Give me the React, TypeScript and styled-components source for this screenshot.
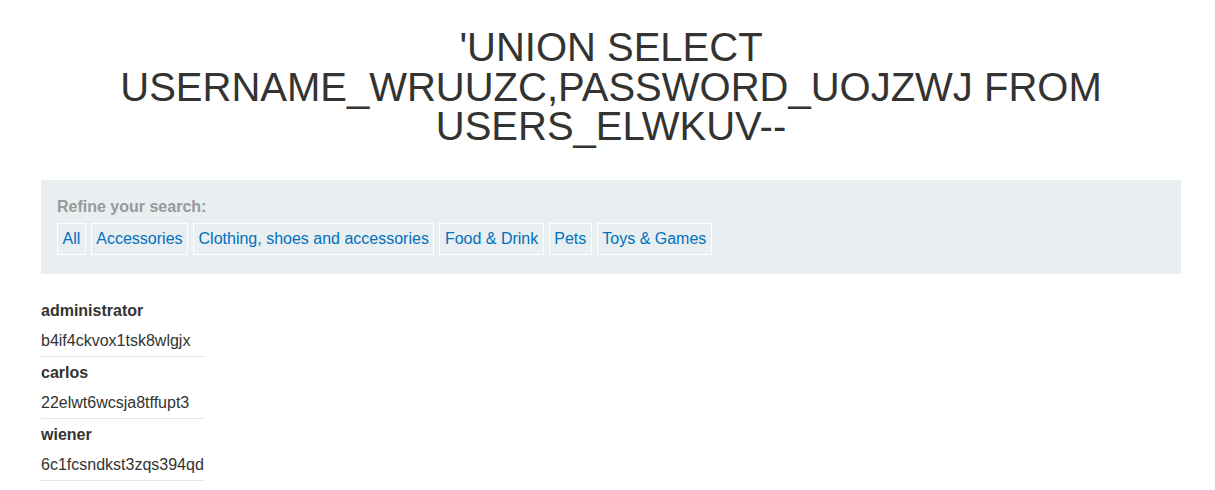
import React from "react";
import styled, { createGlobalStyle } from "styled-components";

const GlobalStyle = createGlobalStyle`
  html, body { margin: 0; padding: 0; background: #fff; }
  body { font-family: "Liberation Sans", Arial, sans-serif; color: #333332; font-size: 16px; }
`;

const Page = styled.div`
  width: 1140px;
  margin-left: 41px;
  padding-top: 28px;
`;

const Title = styled.h1`
  margin: 0 0 33px;
  font-size: 40px;
  line-height: 39.6px;
  font-weight: 400;
  text-align: center;
  color: #333332;
  word-break: break-word;
`;

const Filter = styled.section`
  background: #e9eef1;
  padding: 18px 16px 19px;
  margin-bottom: 21px;
`;

const Label = styled.div`
  font-weight: 700;
  color: #999999;
  line-height: 18.4px;
  margin-bottom: 7px;
`;

const Categories = styled.div`
  display: flex;
  gap: 5px;
`;

const Category = styled.a`
  display: block;
  border: 1px solid #ffffff;
  padding: 5px 4.5px;
  line-height: 19.5px;
  color: #0071bc;
  text-decoration: none;
`;

const Table = styled.table`
  border-collapse: collapse;
  border-spacing: 0;
`;

const Th = styled.th`
  text-align: left;
  font-weight: 700;
  padding: 6px 0 5px;
  line-height: 20px;
  color: #333332;
`;

const Td = styled.td`
  padding: 5px 0;
  line-height: 20px;
  border-bottom: 1px solid #e6e6e6;
  color: #333332;
`;

const categories = ["All", "Accessories", "Clothing, shoes and accessories", "Food & Drink", "Pets", "Toys & Games"];

const users = [
  ["administrator", "b4if4ckvox1tsk8wlgjx"],
  ["carlos", "22elwt6wcsja8tffupt3"],
  ["wiener", "6c1fcsndkst3zqs394qd"],
];

export default function App() {
  return (
    <>
      <GlobalStyle />
      <Page>
        <Title>'UNION SELECT USERNAME_WRUUZC,PASSWORD_UOJZWJ FROM USERS_ELWKUV--</Title>
        <Filter>
          <Label>Refine your search:</Label>
          <Categories>
            {categories.map((c) => (
              <Category key={c} href="#">{c}</Category>
            ))}
          </Categories>
        </Filter>
        <Table>
          <tbody>
            {users.map(([u, p]) => (
              <React.Fragment key={u}>
                <tr><Th>{u}</Th></tr>
                <tr><Td>{p}</Td></tr>
              </React.Fragment>
            ))}
          </tbody>
        </Table>
      </Page>
    </>
  );
}
